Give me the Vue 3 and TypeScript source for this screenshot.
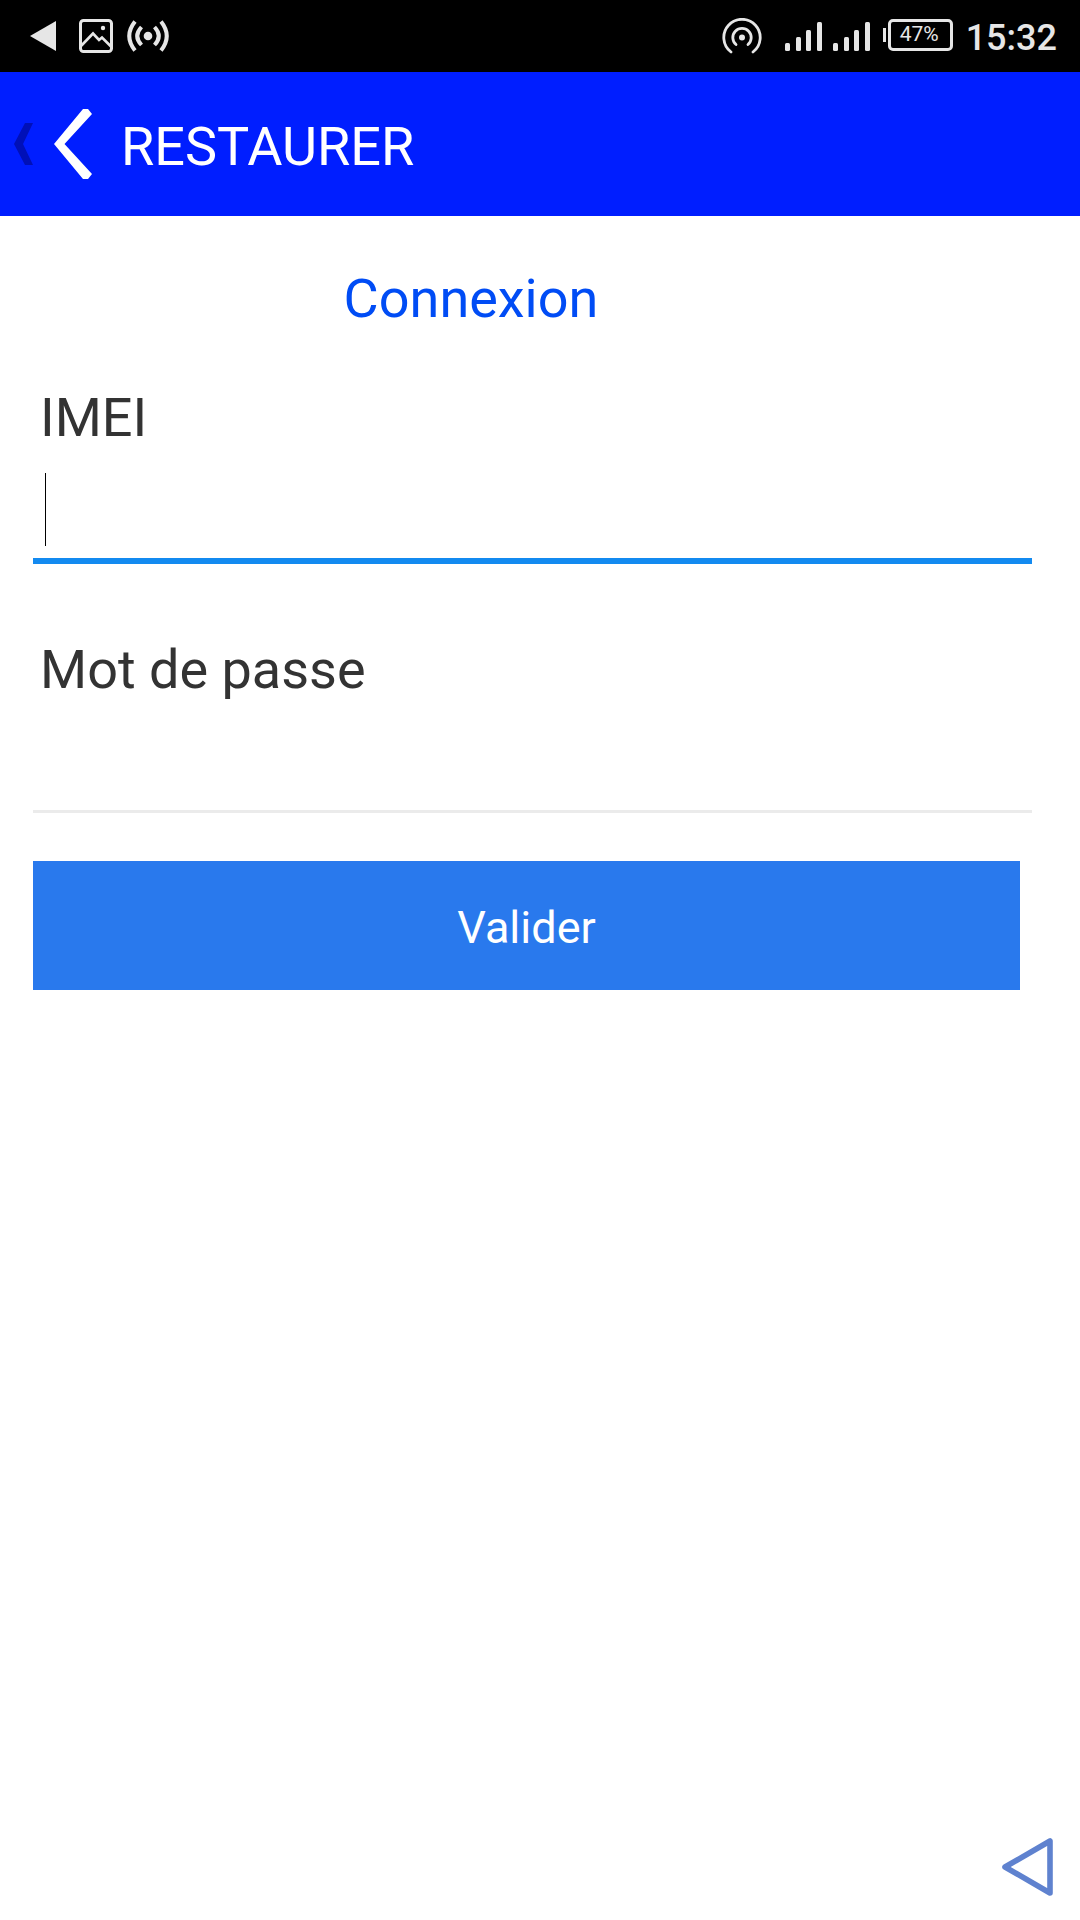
<script setup lang="ts">
import { ref } from 'vue'

const imei = ref('')
const password = ref('')
const batteryLevel = 47
const clock = '15:32'

// Height and top of each reception bar, weakest first
const bars = [
  { x: 0, y: 21, h: 8 },
  { x: 11, y: 15, h: 14 },
  { x: 21, y: 8, h: 21 },
  { x: 32, y: 0, h: 29 },
]
</script>

<template>
  <div class="screen">
    <div class="status">
      <div class="status-side notices">
        <svg width="26" height="30" viewBox="0 0 26 30" aria-hidden="true"><path d="M0 15L26 0V30Z" fill="#e6e6e6" /></svg>
        <svg width="34" height="34" viewBox="0 0 34 34" fill="none" stroke="#e6e6e6" aria-hidden="true">
          <rect x="1.500" y="1.500" width="31" height="31" rx="3" stroke-width="3" />
          <path d="M2 27L14 14.500L20 21L23 18.500L32 27.500" stroke-width="2.600" />
          <circle cx="24" cy="9" r="2.200" fill="#e6e6e6" stroke="none" />
        </svg>
        <svg width="42" height="32" viewBox="0 0 42 32" fill="none" stroke="#e6e6e6" stroke-width="4" aria-hidden="true">
          <circle cx="21" cy="16" r="4.300" fill="#e6e6e6" stroke="none" />
          <path d="M14.500 7Q6 16 14.500 25M27.500 7Q36 16 27.500 25" />
          <path d="M8 1.500Q-3.500 16 8 30.500M34 1.500Q45.500 16 34 30.500" />
        </svg>
      </div>
      <div class="status-side system">
        <svg class="hotspot" width="40" height="36" viewBox="0 0 40 36" fill="none" stroke="#e6e6e6" stroke-width="2.800" stroke-linecap="round" aria-hidden="true">
          <circle cx="20" cy="19.500" r="3" fill="#e6e6e6" stroke="none" />
          <path d="M14 26.500A9.200 9.200 0 1 1 26 26.500" />
          <path d="M9 34A18.200 18.200 0 1 1 31 34" />
        </svg>
        <svg v-for="sim in 2" :key="sim" width="37" height="29" viewBox="0 0 37 29" fill="#e6e6e6" aria-hidden="true">
          <rect v-for="bar in bars" :key="bar.x" :x="bar.x" :y="bar.y" width="5" :height="bar.h" rx="1.500" />
        </svg>
        <div class="battery">
          <span class="battery-tip"></span>
          <span class="battery-body">{{ batteryLevel }}%</span>
        </div>
        <span class="clock">{{ clock }}</span>
      </div>
    </div>

    <header class="bar">
      <button class="back" type="button" aria-label="Retour">
        <svg width="80" height="72" viewBox="0 0 80 72" aria-hidden="true">
          <path d="M12 15H20L10 36L20 57H12L1 36Z" fill="#0010b8" />
          <path d="M70 1H75L79 6L51.500 36L79 66L75 71H70L41 36Z" fill="#fff" />
        </svg>
      </button>
      <h1 class="bar-title">RESTAURER</h1>
    </header>

    <form class="form" @submit.prevent>
      <h2 class="form-title">Connexion</h2>
      <div class="field">
        <label class="label" for="imei">IMEI</label>
        <div class="control">
          <input id="imei" v-model="imei" class="input active" type="text" inputmode="numeric" />
          <span class="caret"></span>
        </div>
      </div>
      <div class="field">
        <label class="label" for="password">Mot de passe</label>
        <div class="control">
          <input id="password" v-model="password" class="input" type="password" />
        </div>
      </div>
      <button class="submit" type="submit">Valider</button>
    </form>

    <button class="nav-back" type="button" aria-label="Page précédente">
      <svg width="52" height="60" viewBox="0 0 52 60" fill="none" aria-hidden="true">
        <path d="M3 30L48 4V56Z" stroke="#5f82cf" stroke-width="5.600" stroke-linejoin="round" />
      </svg>
    </button>
  </div>
</template>

<style>
body {
  background: #fff;
}
</style>

<style scoped>
.screen {
  display: flex;
  flex-direction: column;
  min-height: 100vh;
  font-family: Roboto, "Liberation Sans", sans-serif;
  font-size: 54px;
  line-height: 64px;
  color: #333;
}
button,
input {
  box-sizing: border-box;
  margin: 0;
  padding: 0;
  border: 0;
  background: none;
  color: inherit;
  font: inherit;
  outline: none;
}
h1,
h2 {
  margin: 0;
  font-size: inherit;
  font-weight: 400;
}
svg {
  display: block;
  flex: none;
}
.status {
  display: flex;
  justify-content: space-between;
  height: 72px;
  padding: 0 23px 0 30px;
  background: #000;
  color: #e6e6e6;
}
.status-side {
  display: flex;
  align-items: center;
}
.notices {
  gap: 14px;
}
.notices svg:first-child {
  margin-right: 9px;
}
.system {
  gap: 11px;
}
.hotspot {
  margin-right: 12px;
}
.battery {
  display: flex;
  align-items: center;
  gap: 2px;
  margin: 0 2px 2px 2px;
}
.battery-tip {
  width: 3px;
  height: 14px;
  background: #e6e6e6;
}
.battery-body {
  box-sizing: border-box;
  width: 65px;
  height: 32px;
  padding-right: 2px;
  border: 3px solid #e6e6e6;
  border-radius: 5px;
  font-size: 21px;
  line-height: 24px;
  text-align: center;
}
.clock {
  padding-top: 3px;
  font-size: 36px;
  font-weight: 500;
  line-height: 40px;
}
.bar {
  display: flex;
  align-items: center;
  gap: 28px;
  height: 144px;
  padding-left: 13px;
  background: #001eff;
  color: #fff;
}
.bar-title {
  padding-top: 5px;
}
.form {
  padding: 51px 48px 0 33px;
}
.form-title {
  margin-bottom: 55px;
  padding-right: 123px;
  color: #004cf5;
  text-align: center;
}
.field {
  margin-bottom: 74px;
}
.field + .field {
  margin-bottom: 48px;
}
.label {
  display: block;
  padding-left: 7px;
}
.control {
  position: relative;
}
.input {
  display: block;
  width: 100%;
  height: 111px;
  padding: 0 12px;
  caret-color: transparent;
  border-bottom: 3px solid #ebebeb;
}
.input.active {
  height: 114px;
  border-bottom: 6px solid #138af0;
}
.caret {
  position: absolute;
  top: 23px;
  left: 12px;
  width: 1px;
  height: 73px;
  background: #000;
}
.submit {
  display: block;
  width: calc(100% - 12px);
  height: 129px;
  padding-top: 4px;
  background: #2979ed;
  color: #fff;
  font-size: 45px;
}
.nav-back {
  align-self: flex-end;
  margin: auto 26px 23px 0;
}
</style>
